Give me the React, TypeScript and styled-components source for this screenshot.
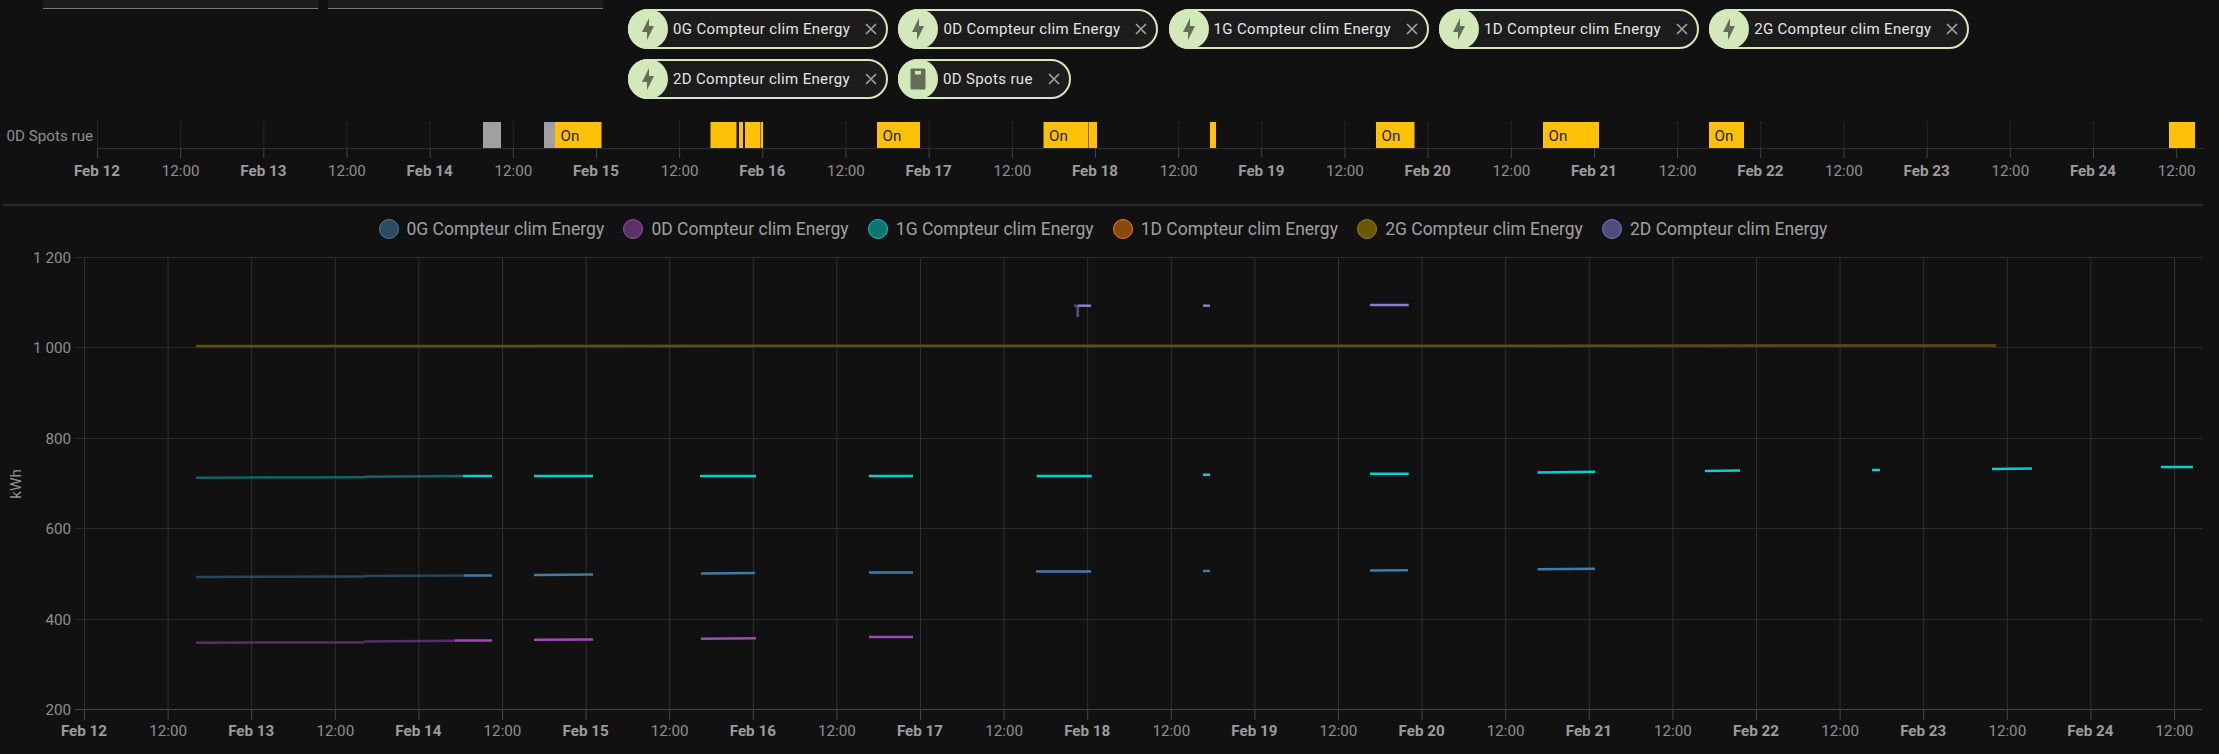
import React from "react";
import styled, { createGlobalStyle } from "styled-components";

const Global = createGlobalStyle`
  html, body { margin: 0; padding: 0; background: #111111; }
  body { font-family: Roboto, "Liberation Sans", sans-serif; }
`;

const Page = styled.div`
  position: relative;
  width: 2219px;
  height: 754px;
  overflow: hidden;
  background: #111111;
`;

const InputRow = styled.div`
  position: absolute;
  left: 43px;
  top: 0;
  display: flex;
  gap: 10px;
`;
const InputStub = styled.div`
  width: 275px;
  height: 8px;
  background: #1c1c1c;
  border-bottom: 1px solid #7a7a7a;
`;

const ChipWrap = styled.div`
  position: absolute;
  left: 628px;
  top: 9px;
  width: 1400px;
  display: flex;
  flex-wrap: wrap;
  gap: 10px 10.2px;
`;
const Chip = styled.div`
  position: relative;
  box-sizing: border-box;
  height: 40px;
  display: flex;
  align-items: center;
  padding: 0 9px 0 43px;
  border: 2px solid #d3e8bb;
  border-radius: 20px;
  background: #1c1c1c;
  color: #e6e6e6;
  font-size: 15px;
  letter-spacing: 0.34px;
`;
const ChipIcon = styled.span`
  position: absolute;
  left: -2px;
  top: -2px;
  width: 40px;
  height: 40px;
  border-radius: 50%;
  background: #d3e8bb;
  display: flex;
  align-items: center;
  justify-content: center;
  svg { width: 24px; height: 24px; fill: #656c58; }
`;
const ChipClose = styled.span`
  margin-left: 15px;
  width: 12px;
  height: 12px;
  svg { display: block; width: 12px; height: 12px; stroke: #a3a3a3; stroke-width: 1.6; }
`;

const Divider = styled.div`
  position: absolute;
  left: 3px;
  top: 204px;
  width: 2200px;
  height: 2px;
  background: #2b2b2b;
`;

const Legend = styled.div`
  position: absolute;
  left: 378.5px;
  top: 219px;
  display: flex;
  gap: 19.2px;
`;
const LegendItem = styled.div`
  display: flex;
  align-items: center;
  gap: 8px;
  height: 20px;
  color: #a0a0a0;
  font-size: 17.5px;
`;
const LegendDot = styled.span<{ $bg: string; $line: string }>`
  box-sizing: border-box;
  width: 20px;
  height: 20px;
  border-radius: 50%;
  background: ${(p) => p.$bg};
  border: 1.5px solid ${(p) => p.$line};
`;

const Drawing = styled.svg`
  position: absolute;
  left: 0;
  top: 0;
`;
const AxisText = styled.text<{ $bold?: boolean; $anchor?: string }>`
  font-family: Roboto, "Liberation Sans", sans-serif;
  font-size: 15.2px;
  fill: ${(p) => (p.$bold ? "#9c9c9c" : "#8f8f8f")};
  font-weight: ${(p) => (p.$bold ? 700 : 400)};
  text-anchor: ${(p) => p.$anchor ?? "middle"};
`;
const StateText = styled.text`
  font-family: Roboto, "Liberation Sans", sans-serif;
  font-size: 15.2px;
  fill: #2a2000;
`;

const Bolt = () => (
  <svg viewBox="0 0 24 24"><path d="M11 15H6L13 1V9H18L11 23V15Z" /></svg>
);
const Spot = () => (
  <svg viewBox="0 0 24 24"><path fillRule="evenodd" d="M6 1.5H18C18.8 1.5 19.5 2.2 19.5 3V21C19.5 21.8 18.8 22.5 18 22.5H6C5.2 22.5 4.5 21.8 4.5 21V3C4.5 2.2 5.2 1.5 6 1.5ZM9 4V7.5H15V4H9Z" /></svg>
);
const Close = () => (
  <svg viewBox="0 0 12 12"><path d="M1 1L11 11M11 1L1 11" /></svg>
);

const chips = [
  ["0G Compteur clim Energy", "bolt"],
  ["0D Compteur clim Energy", "bolt"],
  ["1G Compteur clim Energy", "bolt"],
  ["1D Compteur clim Energy", "bolt"],
  ["2G Compteur clim Energy", "bolt"],
  ["2D Compteur clim Energy", "bolt"],
  ["0D Spots rue", "spot"],
];

const legend = [
  ["0G Compteur clim Energy", "#2f4a63", "#4a7ca6"],
  ["0D Compteur clim Energy", "#5a3268", "#9a4fae"],
  ["1G Compteur clim Energy", "#0c7676", "#0cc4c6"],
  ["1D Compteur clim Energy", "#8a4a0c", "#f07c06"],
  ["2G Compteur clim Energy", "#6a580a", "#988008"],
  ["2D Compteur clim Energy", "#4e4e7e", "#7575c6"],
];

const GRID = "#2c2c2c";
const AXIS = "#454545";
const YELLOW = "#ffc107";
const GREY = "#a0a0a0";

const days = ["Feb 12", "Feb 13", "Feb 14", "Feb 15", "Feb 16", "Feb 17", "Feb 18", "Feb 19", "Feb 20", "Feb 21", "Feb 22", "Feb 23", "Feb 24"];

const Ticks = ({ x0, step, top, axisY, tickEnd, textY, color }: { x0: number; step: number; top: number; axisY: number; tickEnd: number; textY: number; color: string }) => (
  <>
    {days.flatMap((d, i) => {
      const a = x0 + i * step;
      const b = a + step / 2;
      return [
        <g key={d}>
          <line x1={a} x2={a} y1={top} y2={axisY} stroke={color} />
          <line x1={a} x2={a} y1={axisY} y2={tickEnd} stroke={AXIS} />
          <AxisText $bold x={a - 0.5} y={textY}>{d}</AxisText>
          <line x1={b} x2={b} y1={top} y2={axisY} stroke={color} />
          <line x1={b} x2={b} y1={axisY} y2={tickEnd} stroke={AXIS} />
          <AxisText x={b} y={textY}>12:00</AxisText>
        </g>,
      ];
    })}
  </>
);

const bands: [number, number, string, boolean?][] = [
  [483, 501, GREY],
  [544, 555, GREY],
  [555, 601.5, YELLOW, true],
  [710.5, 736.5, YELLOW],
  [739, 743, YELLOW],
  [745, 760.5, YELLOW],
  [761, 763, YELLOW],
  [877, 920, YELLOW, true],
  [1043.5, 1088.5, YELLOW, true],
  [1089, 1097, YELLOW],
  [1210, 1216, YELLOW],
  [1376, 1414.5, YELLOW, true],
  [1543, 1599, YELLOW, true],
  [1709, 1744, YELLOW, true],
  [2169, 2195, YELLOW],
];

const Timeline = () => (
  <Drawing width="2219" height="200">
    <line x1="97" x2="2203" y1="148.5" y2="148.5" stroke="#303030" />
    <Ticks x0={97.5} step={166.33} top={121} axisY={148} tickEnd={158} textY={176} color="#262626" />
    {bands.map(([a, b, c, on]) => (
      <g key={a}>
        <rect x={a} y={122} width={b - a} height={26} fill={c} />
        {on && <StateText x={a + 5.5} y={140.5}>On</StateText>}
      </g>
    ))}
    <AxisText $anchor="start" x="6.5" y="140.5">0D Spots rue</AxisText>
  </Drawing>
);

const TEAL = "#08cfd2";
const BLUE = "#3f7bab";
const PURPLE = "#9c4db3";
const LAV = "#8282cc";
const OLIVE = "#5e5010";

type Seg = [number, number, number, number, string, number?];
const segs: Seg[] = [
  [196, 1996, 346, 345.5, OLIVE],
  [196, 364, 477.7, 477.3, TEAL, 0.45],
  [364, 463, 476.7, 476, TEAL, 0.45],
  [463, 492, 476, 476, TEAL],
  [534, 593, 476, 476, TEAL],
  [700, 756, 476, 476, TEAL],
  [869, 913, 476, 476, TEAL],
  [1036.7, 1091.7, 476, 476, TEAL],
  [1203, 1210, 474.7, 474.7, TEAL],
  [1370, 1408.7, 473.7, 473.7, TEAL],
  [1537.6, 1595, 472.6, 471.7, TEAL],
  [1705, 1740, 471, 470.5, TEAL],
  [1872, 1880, 470, 470, TEAL],
  [1992, 2032, 469, 468.5, TEAL],
  [2161, 2193, 467, 467, TEAL],
  [196, 364, 577, 576.5, BLUE, 0.5],
  [364, 464, 576, 575.5, BLUE, 0.5],
  [464, 492, 575.5, 575.5, BLUE],
  [534, 593, 575, 574.5, BLUE],
  [701, 755, 573.5, 573, BLUE],
  [869, 913, 572.6, 572.6, BLUE],
  [1036, 1091, 571.5, 571.5, BLUE],
  [1203, 1210, 571, 571, BLUE],
  [1370, 1408, 570.6, 570.3, BLUE],
  [1537.6, 1595, 569.3, 568.7, BLUE],
  [196, 364, 642.7, 642.4, PURPLE, 0.5],
  [364, 455, 641.5, 640.8, PURPLE, 0.5],
  [455, 492, 640.5, 640.5, PURPLE],
  [534, 593, 639.8, 639.5, PURPLE],
  [701, 756, 638.7, 638.3, PURPLE],
  [869, 913, 637, 637, PURPLE],
  [1074, 1078, 305.7, 305.7, LAV, 0.5],
  [1078, 1091, 305.7, 305.7, LAV],
  [1077.7, 1077.7, 306, 317, LAV, 0.6],
  [1203, 1210, 305.7, 305.7, LAV],
  [1370, 1408.7, 305, 305, LAV],
];

const yTicks = [
  ["1 200", 257.5],
  ["1 000", 347.5],
  ["800", 438.5],
  ["600", 528.5],
  ["400", 619.5],
];

const Chart = () => (
  <Drawing width="2219" height="754">
    <Ticks x0={84.5} step={167.2} top={257} axisY={709} tickEnd={720} textY={736} color="#2f2f2f" />
    {yTicks.map(([t, y]) => (
      <g key={t}>
        <line x1="75" x2="2202" y1={y} y2={y} stroke={GRID} />
        <AxisText $anchor="end" x="71" y={(y as number) + 5.5}>{t}</AxisText>
      </g>
    ))}
    <line x1="75" x2="2202" y1="709.5" y2="709.5" stroke={AXIS} />
    <AxisText $anchor="end" x="71" y="715">200</AxisText>
    <AxisText transform="translate(21 484) rotate(-90)" x="0" y="0">kWh</AxisText>
    {segs.map(([x1, x2, y1, y2, c, o], i) => (
      <line key={i} x1={x1} x2={x2} y1={y1} y2={y2} stroke={c} strokeWidth="2.5" strokeOpacity={o ?? 1} />
    ))}
  </Drawing>
);

export default function App() {
  return (
    <Page>
      <Global />
      <Timeline />
      <Chart />
      <InputRow>
        <InputStub />
        <InputStub />
      </InputRow>
      <ChipWrap>
        {chips.map(([label, kind]) => (
          <Chip key={label}>
            <ChipIcon>{kind === "bolt" ? <Bolt /> : <Spot />}</ChipIcon>
            {label}
            <ChipClose><Close /></ChipClose>
          </Chip>
        ))}
      </ChipWrap>
      <Divider />
      <Legend>
        {legend.map(([label, bg, line]) => (
          <LegendItem key={label}>
            <LegendDot $bg={bg} $line={line} />
            {label}
          </LegendItem>
        ))}
      </Legend>
    </Page>
  );
}
